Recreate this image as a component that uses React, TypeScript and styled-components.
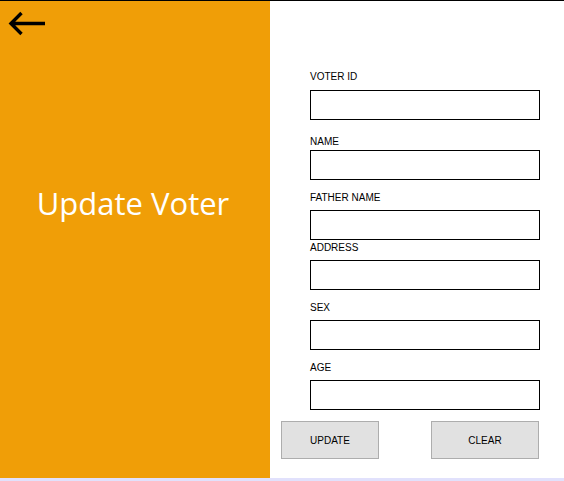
import React from "react";
import styled, { createGlobalStyle } from "styled-components";

const GlobalStyle = createGlobalStyle`
  html, body { margin: 0; padding: 0; background: #fff; }
  body { font-family: "Liberation Sans", Arial, sans-serif; }
`;

const Window = styled.div({
  width: "564px",
  height: "481px",
  display: "flex",
  flexDirection: "column",
  borderTop: "1px solid #000",
  boxSizing: "border-box",
  overflow: "hidden",
});

const Body = styled.div({ flex: 1, display: "flex" });

const BottomStrip = styled.div({ height: "3px", background: "#e1e1fc" });

const SidePanel = styled.div({
  width: "270px",
  background: "#f09e07",
  display: "flex",
  flexDirection: "column",
});

const BackButton = styled.button({
  margin: "9px 0 0 7px",
  padding: 0,
  border: "none",
  background: "transparent",
  width: "40px",
  height: "28px",
  cursor: "pointer",
  display: "block",
});

const Title = styled.h1({
  margin: "147px 4px 0 0",
  fontFamily: '"Open Sans", "Noto Sans", sans-serif',
  fontWeight: 400,
  fontSize: "31px",
  lineHeight: "36px",
  color: "#fff",
  textAlign: "center",
});

const Form = styled.div({
  flex: 1,
  display: "flex",
  flexDirection: "column",
});

const Field = styled.div<{ $top: number; $gap: number }>(({ $top, $gap }) => ({
  marginTop: `${$top}px`,
  marginLeft: "40px",
  display: "flex",
  flexDirection: "column",
  gap: `${$gap}px`,
}));

const Label = styled.label({
  fontSize: "10px",
  lineHeight: "12px",
  height: "12px",
  color: "#000",
});

const TextBox = styled.input({
  width: "230px",
  height: "30px",
  boxSizing: "border-box",
  border: "1px solid #000",
  padding: "0 4px",
  margin: 0,
  outline: "none",
  fontFamily: '"Liberation Sans", Arial, sans-serif',
  fontSize: "12px",
});

const ButtonRow = styled.div({
  marginTop: "11px",
  marginLeft: "11px",
  display: "flex",
  gap: "52px",
});

const Button = styled.button<{ $width: number }>(({ $width }) => ({
  width: `${$width}px`,
  height: "38px",
  boxSizing: "border-box",
  background: "#e1e1e1",
  border: "1px solid #adadad",
  fontFamily: '"Liberation Sans", Arial, sans-serif',
  fontSize: "10px",
  color: "#000",
  padding: 0,
}));

const fields = [
  { label: "VOTER ID", top: 70, gap: 7 },
  { label: "NAME", top: 16, gap: 2 },
  { label: "FATHER NAME", top: 12, gap: 6 },
  { label: "ADDRESS", top: 2, gap: 6 },
  { label: "SEX", top: 12, gap: 6 },
  { label: "AGE", top: 12, gap: 6 },
];

const BackArrow = () => (
  <svg width="40" height="28" viewBox="0 0 40 28">
    <path
      d="M4 13.5 H38 M14.5 3 L4 13.5 L14.5 24"
      stroke="#000"
      strokeWidth="3.4"
      fill="none"
    />
  </svg>
);

const App = () => (
  <>
    <GlobalStyle />
    <Window>
      <Body>
        <SidePanel>
          <BackButton aria-label="Back">
            <BackArrow />
          </BackButton>
          <Title>Update Voter</Title>
        </SidePanel>
        <Form>
          {fields.map((f) => (
            <Field key={f.label} $top={f.top} $gap={f.gap}>
              <Label>{f.label}</Label>
              <TextBox type="text" />
            </Field>
          ))}
          <ButtonRow>
            <Button $width={98}>UPDATE</Button>
            <Button $width={108}>CLEAR</Button>
          </ButtonRow>
        </Form>
      </Body>
      <BottomStrip />
    </Window>
  </>
);

export default App;
